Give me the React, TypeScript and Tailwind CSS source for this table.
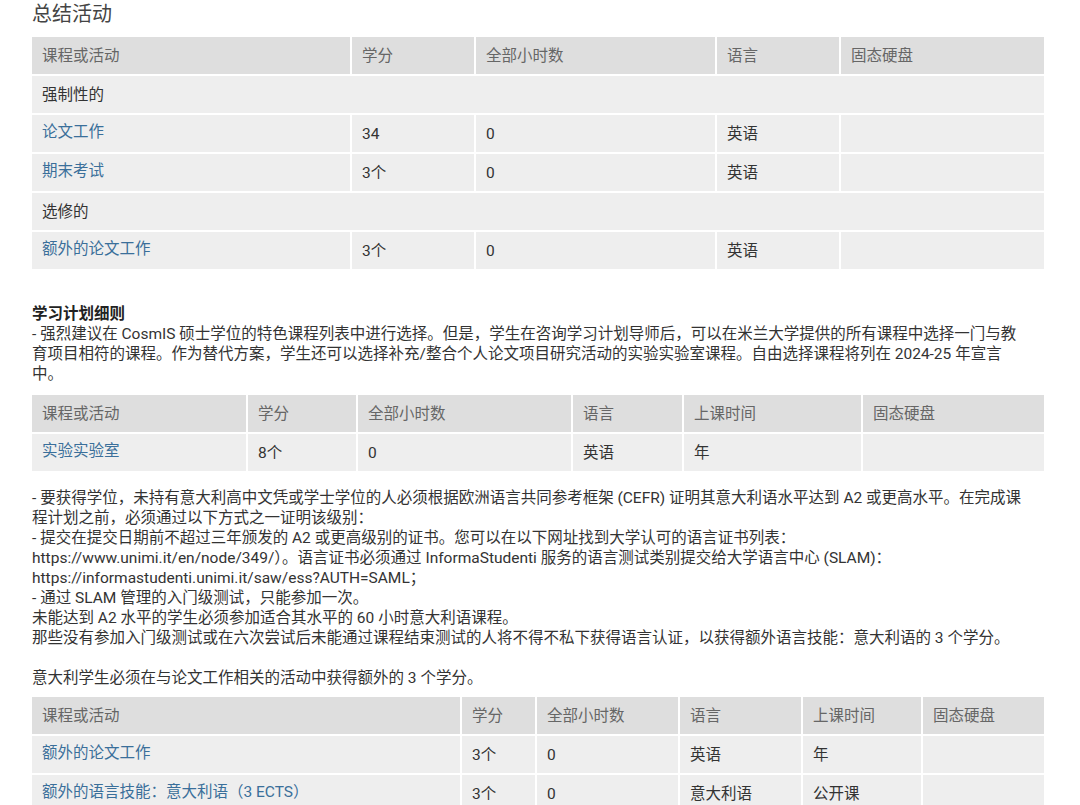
import React from 'react';

type Cell = { text: string; link?: boolean };
type Row = { group?: string; cells?: Cell[] };

const font = { fontFamily: 'Roboto, "Noto Sans CJK SC", sans-serif' };

const DataTable = ({ widths, head, rows }: { widths: number[]; head: string[]; rows: Row[] }) => {
  const last = head.length - 1;
  return (
    <table className="w-[1012px] table-fixed border-separate border-spacing-0 text-[15.5px]">
      <colgroup>
        {widths.map((w, i) => (
          <col key={i} style={{ width: w }} />
        ))}
      </colgroup>
      <thead>
        <tr className="h-[39px] bg-[#dedede]">
          {head.map((h, j) => (
            <th
              key={h}
              className={
                j < last
                  ? 'border-r-2 border-b-2 border-white px-[10px] pt-[2px] text-left align-middle font-normal text-[#666]'
                  : 'border-b-2 border-white px-[10px] pt-[2px] text-left align-middle font-normal text-[#666]'
              }
            >
              {h}
            </th>
          ))}
        </tr>
      </thead>
      <tbody>
        {rows.map((r, i) =>
          r.group ? (
            <tr key={i} className="h-[39px] bg-[#eeeeee]">
              <td colSpan={head.length} className="border-b-2 border-white px-[10px] pt-[2px] align-middle text-[#333]">
                {r.group}
              </td>
            </tr>
          ) : (
            <tr key={i} className="h-[39px] bg-[#eeeeee]">
              {head.map((_, j) => {
                const c = r.cells?.[j];
                const edge = j < last ? 'border-r-2 border-b-2 border-white' : 'border-b-2 border-white';
                return (
                  <td
                    key={j}
                    className={
                      c?.link
                        ? `${edge} px-[10px] pb-[1px] align-middle text-[#3a6f9a]`
                        : `${edge} px-[10px] pt-[3px] align-middle text-[#333]`
                    }
                  >
                    {c?.text ?? ''}
                  </td>
                );
              })}
            </tr>
          )
        )}
      </tbody>
    </table>
  );
};

export default function App() {
  return (
    <div className="min-h-[805px] bg-white px-8 text-[#333]" style={font}>
      <h2 className="text-[20px] leading-[28px] font-normal text-[#444]">总结活动</h2>

      <div className="mt-[9px]">
        <DataTable
          widths={[320, 124, 241, 124, 203]}
          head={['课程或活动', '学分', '全部小时数', '语言', '固态硬盘']}
          rows={[
            { group: '强制性的' },
            { cells: [{ text: '论文工作', link: true }, { text: '34' }, { text: '0' }, { text: '英语' }, { text: '' }] },
            { cells: [{ text: '期末考试', link: true }, { text: '3个' }, { text: '0' }, { text: '英语' }, { text: '' }] },
            { group: '选修的' },
            { cells: [{ text: '额外的论文工作', link: true }, { text: '3个' }, { text: '0' }, { text: '英语' }, { text: '' }] },
          ]}
        />
      </div>

      <div className="mt-[33px] text-[15.5px] leading-[20px]">
        <div className="font-bold text-[#222]">学习计划细则</div>
        <p className="whitespace-nowrap">
          - 强烈建议在 CosmIS 硕士学位的特色课程列表中进行选择。但是，学生在咨询学习计划导师后，可以在米兰大学提供的所有课程中选择一门与教
          <br />
          育项目相符的课程。作为替代方案，学生还可以选择补充/整合个人论文项目研究活动的实验实验室课程。自由选择课程将列在 2024-25 年宣言
          <br />
          中。
        </p>
      </div>

      <div className="mt-[11px]">
        <DataTable
          widths={[216, 110, 215, 111, 179, 181]}
          head={['课程或活动', '学分', '全部小时数', '语言', '上课时间', '固态硬盘']}
          rows={[
            { cells: [{ text: '实验实验室', link: true }, { text: '8个' }, { text: '0' }, { text: '英语' }, { text: '年' }, { text: '' }] },
          ]}
        />
      </div>

      <div className="mt-[15px] whitespace-nowrap text-[15.5px] leading-[20px]">
        <p>
          - 要获得学位，未持有意大利高中文凭或学士学位的人必须根据欧洲语言共同参考框架 (CEFR) 证明其意大利语水平达到 A2 或更高水平。在完成课
          <br />
          程计划之前，必须通过以下方式之一证明该级别：
          <br />
          - 提交在提交日期前不超过三年颁发的 A2 或更高级别的证书。您可以在以下网址找到大学认可的语言证书列表：
          <br />
          https://www.unimi.it/en/node/349/）。语言证书必须通过 InformaStudenti 服务的语言测试类别提交给大学语言中心 (SLAM)：
          <br />
          https://informastudenti.unimi.it/saw/ess?AUTH=SAML；
          <br />
          - 通过 SLAM 管理的入门级测试，只能参加一次。
          <br />
          未能达到 A2 水平的学生必须参加适合其水平的 60 小时意大利语课程。
          <br />
          那些没有参加入门级测试或在六次尝试后未能通过课程结束测试的人将不得不私下获得语言认证，以获得额外语言技能：意大利语的 3 个学分。
        </p>
        <p className="mt-[20px]">意大利学生必须在与论文工作相关的活动中获得额外的 3 个学分。</p>
      </div>

      <div className="mt-[9px]">
        <DataTable
          widths={[430, 75, 143, 123, 120, 121]}
          head={['课程或活动', '学分', '全部小时数', '语言', '上课时间', '固态硬盘']}
          rows={[
            { cells: [{ text: '额外的论文工作', link: true }, { text: '3个' }, { text: '0' }, { text: '英语' }, { text: '年' }, { text: '' }] },
            { cells: [{ text: '额外的语言技能：意大利语（3 ECTS）', link: true }, { text: '3个' }, { text: '0' }, { text: '意大利语' }, { text: '公开课' }, { text: '' }] },
          ]}
        />
      </div>
    </div>
  );
}
